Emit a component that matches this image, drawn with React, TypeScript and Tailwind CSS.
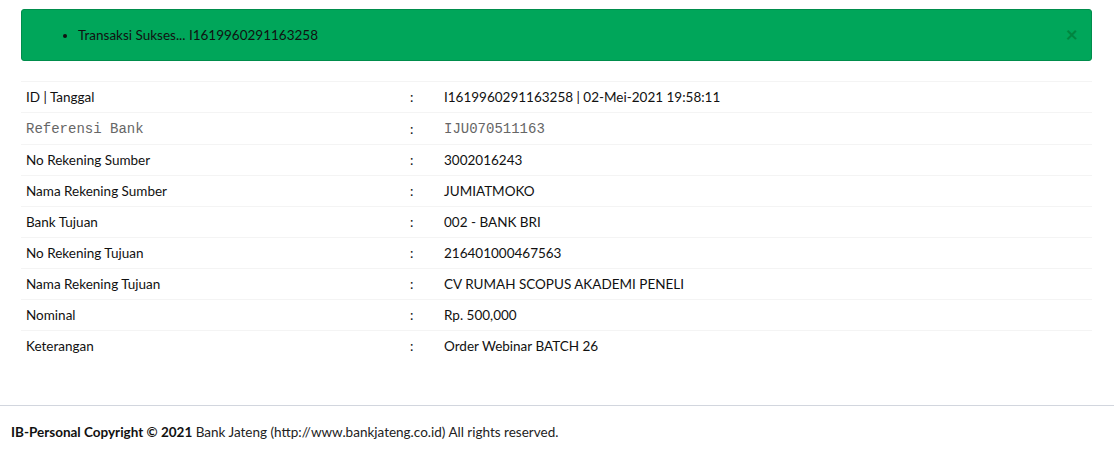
import React from "react";

const rows: { label: string; value: string; mono?: boolean }[] = [
  { label: "ID | Tanggal", value: "I1619960291163258 | 02-Mei-2021 19:58:11" },
  { label: "Referensi Bank", value: "IJU070511163", mono: true },
  { label: "No Rekening Sumber", value: "3002016243" },
  { label: "Nama Rekening Sumber", value: "JUMIATMOKO" },
  { label: "Bank Tujuan", value: "002 - BANK BRI" },
  { label: "No Rekening Tujuan", value: "216401000467563" },
  { label: "Nama Rekening Tujuan", value: "CV RUMAH SCOPUS AKADEMI PENELI" },
  { label: "Nominal", value: "Rp. 500,000" },
  { label: "Keterangan", value: "Order Webinar BATCH 26" },
];

export default function App() {
  return (
    <div
      className="w-[1114px] h-[473px] bg-white text-[#111] text-[13.5px] leading-[20px]"
      style={{ fontFamily: "Lato, 'Noto Sans', sans-serif" }}
    >
      <div className="px-[21px] pt-[9px] pr-[22px]">
        <div className="relative h-[52px] bg-[#00a65a] border border-[#008d4c] rounded-[3px] flex items-center">
          <ul className="list-disc pl-[56px] m-0">
            <li>Transaksi Sukses... I1619960291163258</li>
          </ul>
          <span className="absolute right-[13px] top-[14px] text-[21px] font-bold leading-[20px] text-[#00853f]">
            ×
          </span>
        </div>
        <div className="mt-[20px]">
          {rows.map((r, i) => (
            <div
              key={i}
              className={
                "grid grid-cols-[384px_34px_1fr] border-t border-[#f4f4f4] items-center " +
                (r.mono ? "h-[32px]" : "h-[31px]")
              }
            >
              <div
                className={r.mono ? "pl-[5px] text-[#666] text-[14px]" : "pl-[5px]"}
                style={r.mono ? { fontFamily: "'Liberation Mono', monospace" } : undefined}
              >
                {r.label}
              </div>
              <div className="pl-[5px]">:</div>
              <div
                className={r.mono ? "pl-[5px] text-[#666] text-[14px]" : "pl-[5px]"}
                style={r.mono ? { fontFamily: "'Liberation Mono', monospace" } : undefined}
              >
                {r.value}
              </div>
            </div>
          ))}
        </div>
      </div>
      <div className="mt-[44px] border-t border-[#d2d6de] px-[11px] pt-[16px] text-[#222]">
        <span className="font-bold text-[#111]">IB-Personal Copyright © 2021</span> Bank Jateng
        (http://www.bankjateng.co.id) All rights reserved.
      </div>
    </div>
  );
}
